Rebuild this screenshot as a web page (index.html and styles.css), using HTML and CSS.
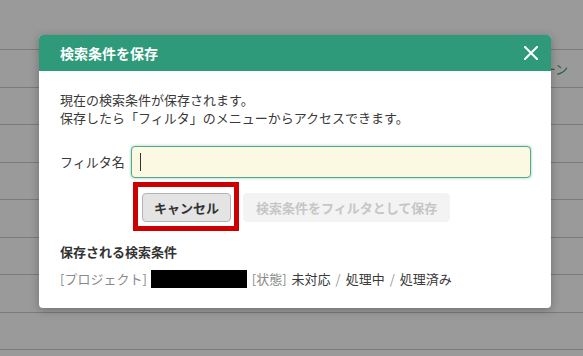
FILE: index.html
```html
<!DOCTYPE html>
<html lang="ja">
<head>
<meta charset="utf-8">
<title>検索条件を保存</title>
<link rel="stylesheet" href="styles.css">
</head>
<body>
<div class="page">
  <div class="rows">
    <div class="row row-top"></div>
    <div class="row row-a"><span class="row-text">スクリーン</span></div>
    <div class="row row-b"></div>
    <div class="row row-a"></div>
    <div class="row row-b"></div>
    <div class="row row-a"></div>
    <div class="row row-b"></div>
    <div class="row row-a"></div>
    <div class="row row-b"></div>
  </div>

  <div class="modal">
    <div class="modal-header">
      <span class="modal-title">検索条件を保存</span>
      <svg class="close" width="14" height="14" viewBox="0 0 14 14" aria-hidden="true">
        <path d="M1 1 L13 13 M13 1 L1 13" stroke="#ffffff" stroke-width="2" stroke-linecap="square" fill="none"/>
      </svg>
    </div>
    <div class="modal-body">
      <p class="intro">現在の検索条件が保存されます。<br>保存したら「フィルタ」のメニューからアクセスできます。</p>
      <div class="form-row">
        <span class="label">フィルタ名</span>
        <div class="input"><span class="caret"></span></div>
      </div>
      <div class="actions">
        <span class="highlight"><button class="btn btn-cancel">キャンセル</button></span>
        <button class="btn btn-save">検索条件をフィルタとして保存</button>
      </div>
      <h3 class="cond-title">保存される検索条件</h3>
      <div class="cond">
        <span class="key">[プロジェクト]</span>
        <span class="redact"></span>
        <span class="key">[状態]</span>
        <span class="val">未対応</span><span class="sep">/</span><span class="val">処理中</span><span class="sep">/</span><span class="val">処理済み</span>
      </div>
    </div>
  </div>
</div>
</body>
</html>
```
FILE: styles.css
```css
* { box-sizing: border-box; }

html, body {
  margin: 0;
  padding: 0;
}

body {
  font-family: "Noto Sans CJK JP", "Noto Sans", sans-serif;
  font-size: 13px;
  color: #333;
  background: #9a9a9a;
}

.page {
  position: relative;
  width: 583px;
  height: 356px;
  overflow: hidden;
  background: #9a9a9a;
}

.rows {
  display: flex;
  flex-direction: column;
}

.row {
  border-bottom: 1px solid #7b7b7b;
  display: flex;
  align-items: center;
  justify-content: flex-end;
  padding-right: 15px;
}

.row-top { height: 50px; }
.row-a { height: 38px; }
.row-b { height: 37px; }

.row-text {
  color: #2c5d4f;
  font-size: 13px;
  line-height: 18px;
  padding-top: 1px;
}

.modal {
  position: absolute;
  left: 39px;
  top: 35px;
  width: 512px;
  background: #ffffff;
  border-radius: 4px;
  box-shadow: 0 2px 10px rgba(0, 0, 0, 0.28);
  overflow: hidden;
}

.modal-header {
  height: 36px;
  background: #2e9a79;
  display: flex;
  align-items: center;
  justify-content: space-between;
  padding: 0 13px 0 21px;
}

.modal-title {
  color: #ffffff;
  font-size: 14px;
  font-weight: bold;
  line-height: 20px;
}

.close {
  display: block;
}

.modal-body {
  padding: 20px 20px 20px 21px;
}

.intro {
  margin: 0;
  line-height: 18px;
  color: #3a3a3a;
}

.form-row {
  display: flex;
  align-items: center;
  margin-top: 19px;
}

.label {
  width: 71px;
  flex: none;
  line-height: 18px;
  color: #3a3a3a;
}

.input {
  flex: 1;
  height: 32px;
  background: #fbf9e1;
  border: 1px solid #55a88a;
  border-radius: 4px;
  box-shadow: 0 0 3px rgba(46, 154, 121, 0.55);
  display: flex;
  align-items: center;
  padding-left: 8px;
}

.caret {
  width: 1px;
  height: 18px;
  background: #333;
}

.actions {
  display: flex;
  align-items: flex-start;
  gap: 4px;
  margin-top: 4px;
  padding-left: 73px;
}

.highlight {
  display: flex;
  border: 5px solid #cc0000;
  padding: 6px 3px 4px 4px;
}

.btn {
  font-family: "Noto Sans CJK JP", "Noto Sans", sans-serif;
  font-size: 13px;
  font-weight: bold;
  height: 29px;
  line-height: 18px;
  border-radius: 4px;
  padding: 0 11px;
  margin: 0;
}

.btn-cancel {
  background: #e4e4e4;
  border: 1px solid #b4b4b4;
  color: #333;
}

.btn-save {
  margin-top: 11px;
  background: #f3f3f3;
  border: 1px solid #f3f3f3;
  color: #c6c6c6;
  padding: 0 12px;
}

.cond-title {
  margin: 12px 0 0;
  font-size: 13px;
  font-weight: bold;
  line-height: 18px;
  color: #333;
}

.cond {
  display: flex;
  align-items: center;
  margin-top: 9px;
  line-height: 18px;
}

.key {
  color: #8a8a8a;
}

.redact {
  width: 96px;
  height: 18px;
  background: #000;
  margin: 0 5px 0 4px;
}

.val {
  color: #3a3a3a;
}

.key + .val {
  margin-left: 5px;
}

.sep {
  color: #999;
  margin: 0 5px;
}
```
